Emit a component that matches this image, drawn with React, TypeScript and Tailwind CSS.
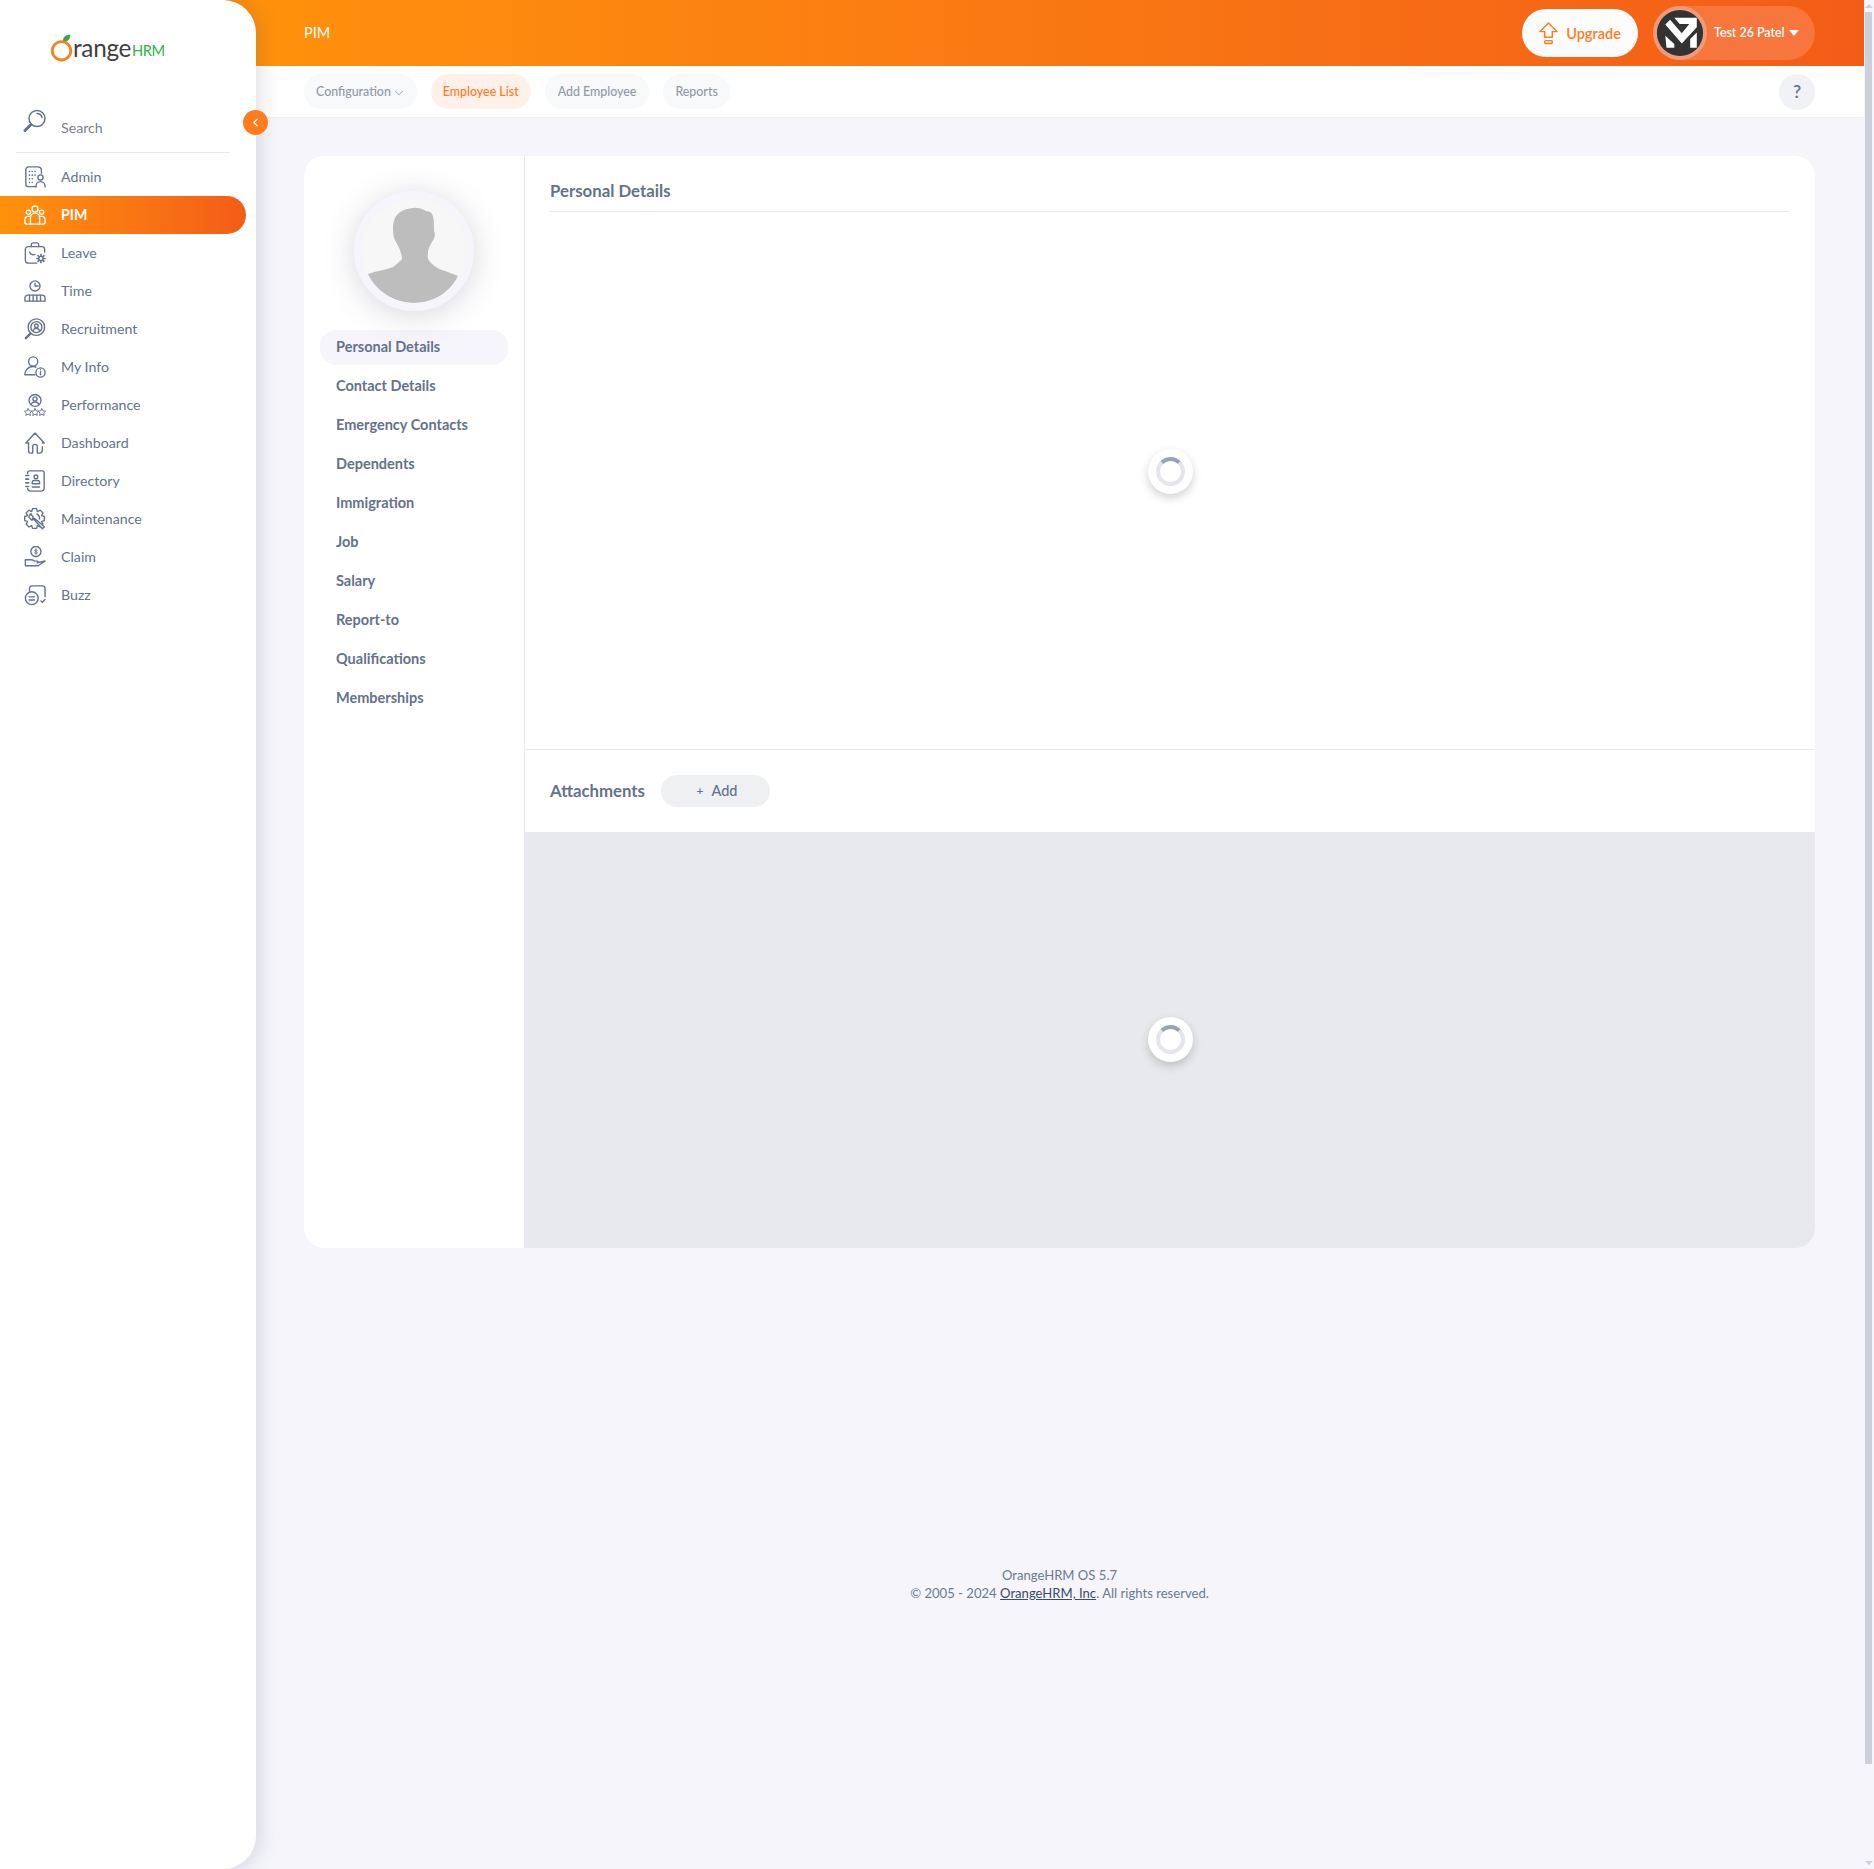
import { ChevronDown, ChevronLeft } from "lucide-react";
import type { ReactNode } from "react";

function Svg({ children }: { children: ReactNode }) {
  return (
    <svg viewBox="0 0 24 24" className="w-[22px] h-[22px] shrink-0" fill="none" stroke="currentColor" strokeWidth="1.5" strokeLinecap="round" strokeLinejoin="round">
      {children}
    </svg>
  );
}

// gear outline for the maintenance icon, 8 teeth
function gearPath(cx: number, cy: number, outer: number, inner: number) {
  const pts: string[] = [];
  for (let i = 0; i < 8; i++) {
    const a = (i * Math.PI) / 4;
    const step = Math.PI / 14;
    [
      [inner, a - step * 1.7],
      [outer, a - step * 0.9],
      [outer, a + step * 0.9],
      [inner, a + step * 1.7],
    ].forEach(([r, t]) => pts.push(`${(cx + r * Math.cos(t)).toFixed(2)} ${(cy + r * Math.sin(t)).toFixed(2)}`));
  }
  return "M" + pts.join("L") + "Z";
}

const icons: Record<string, ReactNode> = {
  Admin: (
    <Svg>
      <path d="M13 22.500H5a3 3 0 0 1-3-3V4a3 3 0 0 1 3-3h10a4 4 0 0 1 4 3v4" />
      <path d="M6 6h.01M9 6h.01M12 6h.01M6 10h.01M9 10h.01M12 10h.01M6 14h.01M9 14h.01M6 18h.01M9 18h.01" strokeWidth="1.800" />
      <circle cx="18" cy="12.500" r="2.800" />
      <path d="M13 23v-1a4.500 4.500 0 0 1 10 0v1" />
    </Svg>
  ),
  PIM: (
    <Svg>
      <circle cx="12" cy="5.500" r="3.300" />
      <circle cx="4.800" cy="9" r="2.300" />
      <circle cx="19.200" cy="9" r="2.300" />
      <path d="M7 22V15a5 5 0 0 1 10 0v7" />
      <path d="M7 13.500H4.500A3.500 3.500 0 0 0 1 17v3a2 2 0 0 0 2 2h18a2 2 0 0 0 2-2v-3a3.500 3.500 0 0 0-3.500-3.500H17" />
    </Svg>
  ),
  Leave: (
    <Svg>
      <path d="M8 5V3a2 2 0 0 1 2-2h4a2 2 0 0 1 2 2v2" />
      <path d="M14 23H5a3.500 3.500 0 0 1-3.500-3.500V8A3 3 0 0 1 4.500 5h15A3 3 0 0 1 22.500 8v3" />
      <path d="M6 11c1 2.500 3 3.500 6 2.500" />
      <circle cx="18.500" cy="18" r="2.300" />
      <path d="M18.500 13.500v1.500M18.500 21v1.500M14 18h1.500M21.500 18H23M15.300 14.800l1.100 1.100M20.600 20.100l1.100 1.100M15.300 21.200l1.100-1.100M20.600 15.900l1.100-1.100" strokeWidth="1.800" />
    </Svg>
  ),
  Time: (
    <Svg>
      <circle cx="12" cy="6.500" r="5.500" />
      <path d="M12 3.500v3h3.500" />
      <path d="M1 23v-3a3.500 3.500 0 0 1 3.500-3.500h15A3.500 3.500 0 0 1 23 20v3z" />
      <path d="M6 16.500V23M10 16.500V23M14 16.500V23M18 16.500V23" />
    </Svg>
  ),
  Recruitment: (
    <Svg>
      <circle cx="13.500" cy="10" r="9" />
      <circle cx="13.500" cy="10" r="6" />
      <circle cx="13.500" cy="8.500" r="2" />
      <path d="M10 13.500a3.800 3.800 0 0 1 7 0" />
      <path d="M7 17l-5 5" strokeWidth="2.600" />
    </Svg>
  ),
  "My Info": (
    <Svg>
      <circle cx="10" cy="6" r="5" />
      <path d="M1 20c0-5 4-8.500 9-8.500 1 0 2 .2 3 .5" />
      <path d="M1 20.500h11" />
      <circle cx="18" cy="18" r="5" />
      <path d="M18 17v3.500M18 15h.01" />
    </Svg>
  ),
  Performance: (
    <Svg>
      <circle cx="12" cy="7" r="6.500" />
      <circle cx="12" cy="5.500" r="2.300" />
      <path d="M7.500 11.500a5 5 0 0 1 9 0" />
      <path d="M4.500 16l1.300 2.400 2.700.4-2 1.900.5 2.700-2.500-1.300-2.500 1.300.5-2.700-2-1.900 2.700-.4zM12 16l1.300 2.400 2.700.4-2 1.900.5 2.700-2.500-1.300-2.500 1.300.5-2.700-2-1.900 2.700-.4zM19.500 16l1.300 2.400 2.700.4-2 1.900.5 2.700-2.500-1.300-2.500 1.300.5-2.700-2-1.900 2.700-.4z" strokeWidth="1" />
    </Svg>
  ),
  Dashboard: (
    <Svg>
      <path d="M5 21V12H2L12 1l10 11h-2" />
      <path d="M5 21a2 2 0 0 0 2 2h2.500v-7a2.500 2.500 0 0 1 5 0v7H17a3 3 0 0 0 3-3v-4" />
    </Svg>
  ),
  Directory: (
    <Svg>
      <path d="M4 4V3a2 2 0 0 1 2-2h14a2 2 0 0 1 2 2v17M22 20a3 3 0 0 1-3 3H7a3 3 0 0 1-3-3" />
      <path d="M2 6h3M2 10h3M2 14h3M2 18h3" strokeWidth="1.800" />
      <circle cx="13" cy="7.500" r="2" />
      <path d="M9 15v-1.500a2 2 0 0 1 2-2h4a2 2 0 0 1 2 2V15zM9 18.500h8" />
    </Svg>
  ),
  Maintenance: (
    <Svg>
      <path d={gearPath(11.500, 11.500, 11, 8.300)} />
      <path d="M7 6.500l3 3-.8 2.500 2.500-.5 10.500 9-2.200 2.200-9-10.200-2.500.8-3-3c-.3-2 .5-3.500 2.500-3.800z" fill="#ffffff" />
      <path d="M14 6.500a6 6 0 0 1 3 5.500" />
    </Svg>
  ),
  Claim: (
    <Svg>
      <circle cx="13" cy="6" r="5.500" />
      <path d="M13 3v6M14.500 4.500c-1-.8-3-.6-3 .6s3 .8 3 2-2 1.300-3 .5" strokeWidth="1" />
      <path d="M1.500 15h6c2 0 3 .8 4 1.500h3c1 0 1.200 1.500 0 1.800l8.500-2-7.500 5.200H1.500z" />
    </Svg>
  ),
  Buzz: (
    <Svg>
      <path d="M6 8V5a3 3 0 0 1 3-3h11a3 3 0 0 1 3 3v9" />
      <path d="M23 17l-3 3-1.500-1.500" />
      <circle cx="8.500" cy="15.500" r="7" />
      <path d="M5.500 14h6M5.500 17.500h6" />
    </Svg>
  ),
};

const nav = ["Admin", "PIM", "Leave", "Time", "Recruitment", "My Info", "Performance", "Dashboard", "Directory", "Maintenance", "Claim", "Buzz"];
const tabs = ["Personal Details", "Contact Details", "Emergency Contacts", "Dependents", "Immigration", "Job", "Salary", "Report-to", "Qualifications", "Memberships"];

function Spinner() {
  return (
    <div className="w-[45px] h-[45px] rounded-full bg-white shadow-[0_4px_10px_rgba(0,0,0,0.18)] flex items-center justify-center">
      <div className="w-[29px] h-[29px] rounded-full border-[4px] border-[#e4e6ec] border-t-[#98a3b5]"></div>
    </div>
  );
}

function Logo() {
  return (
    <div className="flex items-end h-[33px] ml-[50px]">
      <svg viewBox="0 0 26 32" className="w-[24px] h-[30px] shrink-0 mb-[1px]">
        <path d="M14.500 10.500C13 5 16 2 22 1.500c0 5-3 8-7.500 9z" fill="#37a84a" />
        <circle cx="12.500" cy="19" r="10" fill="none" stroke="#f58220" strokeWidth="3" />
      </svg>
      <span className="-ml-[1px] text-[24.300px] leading-[32px] tracking-[-0.3px] text-[#3f3f3f] font-['Lato',sans-serif]">range</span>
      <span className="ml-[1px] text-[14.700px] leading-[28px] tracking-[-0.5px] text-[#2db34a] font-['Lato',sans-serif]">HRM</span>
    </div>
  );
}

function Avatar() {
  return (
    <svg viewBox="0 0 180 180" className="w-[54px] h-[54px] shrink-0">
      <circle cx="90" cy="90" r="90" fill="#f09a7c" />
      <circle cx="90" cy="90" r="77" fill="#333333" />
      <polygon fill="#ffffff" points="41,62 96,125 146,71 146,39 71,39 89,60 121,60 96,91 57,46" />
      <polygon fill="#ffffff" points="41,99 71,127 71,139 45,139" />
      <polygon fill="#ffffff" points="124,110 146,88 146,139 124,139" />
    </svg>
  );
}

export default function App() {
  return (
    <div className="flex h-[1869px] overflow-hidden bg-[#f5f5fb] text-[#64728c] font-['Lato','Noto_Sans',sans-serif]">
      <aside className="relative z-10 w-[256px] shrink-0 bg-white rounded-r-[33px] shadow-[0_0_24px_rgba(60,60,90,0.22)]">
        <div className="pt-[31px] h-[104px]">
          <Logo />
        </div>
        <div className="ml-4 w-[214px] h-[49px] border-b border-[#e8eaef] flex items-start pl-[7px] gap-[14px] pt-[5px]">
          <svg viewBox="0 0 24 24" className="w-[24px] h-[24px] shrink-0" fill="none" stroke="#64728c" strokeWidth="1.500" strokeLinecap="round">
            <circle cx="14" cy="9.500" r="8" />
            <path d="M14 4.500a5 5 0 0 1 5 4" />
            <path d="M8 15.500l-6 6" strokeWidth="3" />
          </svg>
          <span className="text-[14.200px] leading-[20px] mt-[9px] text-[#7a7f8c]">Search</span>
        </div>
        <ul className="pt-[5px] pr-[10px]">
          {nav.map((n) => (
            <li
              key={n}
              className={
                n === "PIM"
                  ? "h-[38px] flex items-center pl-6 gap-[15px] rounded-r-[20px] text-white font-bold text-[14.200px] bg-gradient-to-r from-[#ff920b] to-[#f35c17]"
                  : "h-[38px] flex items-center pl-6 gap-[15px] text-[14.200px] text-[#64728c]"
              }
            >
              {icons[n]}
              <span>{n}</span>
            </li>
          ))}
        </ul>
        <button className="absolute left-[243px] top-[110px] w-[25px] h-[25px] rounded-full bg-[#ff7b1d] text-white flex items-center justify-center">
          <ChevronLeft size={13} strokeWidth={2.500} />
        </button>
      </aside>

      <main className="flex-1 min-w-0 flex flex-col">
        <header className="h-[66px] shrink-0 -ml-[30px] pl-[78px] pr-[49px] bg-gradient-to-r from-[#ff920b] to-[#f35c17] flex items-center justify-between text-white">
          <span className="text-[14.500px]">PIM</span>
          <div className="flex items-center gap-[15px]">
            <button className="w-[116px] h-[48px] rounded-full bg-[#fcfcfc] text-[#ff7b1d] font-semibold text-[14.500px] flex items-center justify-center gap-[8px]">
              <svg viewBox="0 0 20 24" className="w-[19px] h-[23px]" fill="none" stroke="#ff7b1d" strokeWidth="1.500" strokeLinejoin="round">
                <path d="M10 1l9 9h-5v6H6v-6H1z" />
                <rect x="6" y="19.500" width="8" height="3" rx="1" />
              </svg>
              <span className="pt-[2px]">Upgrade</span>
            </button>
            <div className="w-[162px] h-[54px] rounded-full bg-[#f6763e] flex items-center">
              <Avatar />
              <span className="ml-[7px] text-[12.400px] font-semibold whitespace-nowrap">Test 26 Patel</span>
              <span className="ml-[4px] w-0 h-0 border-l-[5px] border-r-[5px] border-t-[6px] border-l-transparent border-r-transparent border-t-white"></span>
            </div>
          </div>
        </header>

        <nav className="h-[52px] shrink-0 bg-white border-b border-[#f0f1f5] pl-[48px] pr-[49px] flex items-center justify-between text-[12.400px] font-medium">
          <div className="flex items-center gap-[14px]">
            <span className="h-[35px] pl-[12px] pr-[11px] pt-[2px] rounded-full bg-[#f8f9fb] text-[#8f99aa] flex items-center gap-[1px]">
              Configuration <ChevronDown size={14} strokeWidth={1.500} />
            </span>
            <span className="h-[35px] px-[12px] pt-[2px] rounded-full bg-[#fff1e9] text-[#ff7b1d] flex items-center">Employee List</span>
            <span className="h-[35px] px-[13px] pt-[2px] rounded-full bg-[#f8f9fb] text-[#8f99aa] flex items-center">Add Employee</span>
            <span className="h-[35px] px-[12px] pt-[2px] rounded-full bg-[#f8f9fb] text-[#8f99aa] flex items-center">Reports</span>
          </div>
          <span className="w-[36px] h-[36px] rounded-full bg-[#f0f2f5] text-[#64728c] flex items-center justify-center text-[18px] font-semibold">?</span>
        </nav>

        <div className="flex-1 pl-[48px] pr-[49px] pt-[38px]">
          <section className="h-[1092px] flex bg-white rounded-[20px] overflow-hidden">
            <div className="w-[221px] shrink-0 border-r border-[#e8eaf3] px-4 pt-[35px]">
              <div className="relative mx-auto w-[120px] h-[120px] rounded-full border-[8px] border-[#f5f5fb] bg-[#f7f7f7] overflow-hidden shadow-[0_4px_30px_rgba(100,100,130,0.25)]">
                <svg viewBox="0 0 104 104" className="w-full h-full">
                  <path fill="#bdbdbd" d="M52 9C58 8 62 12 68 13C72 15 72 22 72 32C74 36 72 40 70 43C67 48 65 52 66 60C70 66 76 70 83 72L96 77C88 93 72 104 52 104C32 104 14 92 6 75C14 72 24 71 31 68C35 65 38 62 40 60C40 55 37 48 34 43C32 40 31 36 31 30C31 18 36 10 52 9Z" />
                </svg>
              </div>
              <ul className="mt-[19px] text-[14.500px] font-bold">
                {tabs.map((t, i) => (
                  <li
                    key={t}
                    className={
                      i === 0
                        ? "h-[35px] mb-[4px] pb-[1px] flex items-center pl-4 rounded-[16px] bg-[#f5f5fb]"
                        : "h-[35px] mb-[4px] pb-[1px] flex items-center pl-4"
                    }
                  >
                    {t}
                  </li>
                ))}
              </ul>
            </div>

            <div className="flex-1 min-w-0 flex flex-col">
              <div className="h-[594px] shrink-0 border-b border-[#e8eaef] px-[25px] pt-[24px] flex flex-col">
                <h2 className="h-[32px] shrink-0 border-b border-[#e8eaef] text-[16.800px] font-bold leading-[22px]">Personal Details</h2>
                <div className="flex-1 flex justify-center pt-[237px]">
                  <Spinner />
                </div>
              </div>
              <div className="h-[82px] shrink-0 px-[25px] flex items-center gap-[16px]">
                <h3 className="text-[16.800px] font-bold">Attachments</h3>
                <button className="w-[109px] h-[32px] pl-[3px] rounded-full bg-[#eff0f2] text-[14.500px] font-medium flex items-center justify-center gap-[8px]">
                  <span className="text-[12px]">+</span> Add
                </button>
              </div>
              <div className="flex-1 bg-[#e8e9ee] flex justify-center pt-[185px]">
                <Spinner />
              </div>
            </div>
          </section>

          <footer className="mt-[318px] text-center text-[13.100px] leading-[18px] text-[#6b7a90]">
            <p>OrangeHRM OS 5.7</p>
            <p>
              © 2005 - 2024 <a className="underline text-[#3a4a6b]">OrangeHRM, Inc</a>. All rights reserved.
            </p>
          </footer>
        </div>
      </main>

      {/* page scrollbar */}
      <div className="w-[10px] shrink-0 pl-[1px] pr-[2px] flex flex-col items-center">
        <span className="mt-[4px] w-0 h-0 border-l-[4px] border-r-[4px] border-b-[4px] border-l-transparent border-r-transparent border-b-[#cdd0da]"></span>
        <div className="mt-[4px] w-full h-[1752px] bg-[#cdd0da]"></div>
        <span className="mt-auto mb-[4px] w-0 h-0 border-l-[4px] border-r-[4px] border-t-[4px] border-l-transparent border-r-transparent border-t-[#cdd0da]"></span>
      </div>
    </div>
  );
}
